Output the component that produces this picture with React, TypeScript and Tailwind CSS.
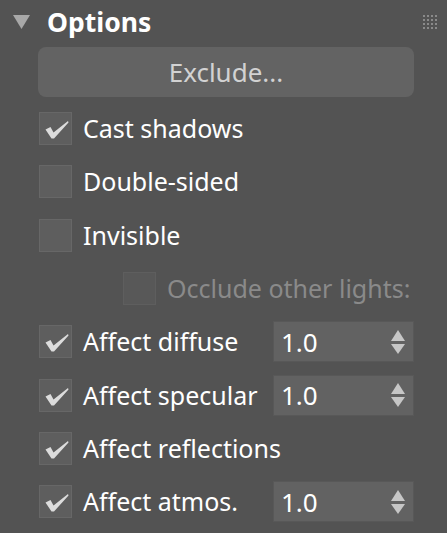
import type { ReactNode } from 'react';

const font = { fontFamily: '"Noto Sans", "Open Sans", sans-serif' };

function Check() {
  return (
    <svg width="33" height="33" viewBox="0 0 33 33" className="block">
      <path d="M5.5 16.5 L10.5 14 L13.5 19.5 L28 8 L28.5 9.5 L14 25.5 L11.5 25.5 Z" fill="#dcdcdc" />
    </svg>
  );
}

function Box({ checked, dim }: { checked?: boolean; dim?: boolean }) {
  return (
    <div
      className={`w-[33px] h-[33px] shrink-0 border ${
        dim ? 'bg-[#585858] border-[#5e5e5e]' : 'bg-[#5e5e5e] border-[#676767]'
      }`}
    >
      {checked && <Check />}
    </div>
  );
}

function Spinner({ value }: { value: string }) {
  return (
    <div className="ml-auto mr-[33px] w-[141px] h-[41px] bg-[#626262] border border-[#585858] flex items-center pl-[7px] pr-[8px]">
      <span className="text-white text-[26px] leading-none">{value}</span>
      <svg width="14" height="26" viewBox="0 0 14 26" className="ml-auto">
        <path d="M7 1 L14 12 L0 12 Z" fill="#c6c6c6" />
        <path d="M0 15 L14 15 L7 25 Z" fill="#c6c6c6" />
      </svg>
    </div>
  );
}

function Row({ children, indent }: { children: ReactNode; indent?: boolean }) {
  return (
    <div className={`h-[53.3px] flex items-center ${indent ? 'pl-[123px]' : 'pl-[39px]'}`}>
      {children}
    </div>
  );
}

function Label({ children, dim }: { children: ReactNode; dim?: boolean }) {
  return (
    <span className={`ml-[11px] text-[25px] leading-none ${dim ? 'text-[#8a8a8a]' : 'text-white'}`}>
      {children}
    </span>
  );
}

function Grip() {
  return (
    <div className="grid grid-cols-4 gap-[2px] mr-[10px]">
      {Array.from({ length: 16 }).map((_, i) => (
        <div key={i} className="w-[2px] h-[2px] bg-[#8a8a8a]" />
      ))}
    </div>
  );
}

export default function App() {
  return (
    <div className="w-[447px] h-[533px] bg-[#535353] overflow-hidden" style={font}>
      <div className="h-[44px] flex items-center pl-[13px]">
        <svg width="17" height="14" viewBox="0 0 17 14">
          <path d="M0 0 L17 0 L8.5 14 Z" fill="#a8a8a8" />
        </svg>
        <span className="ml-[17px] text-white font-bold text-[26.5px] leading-none">Options</span>
        <div className="ml-auto">
          <Grip />
        </div>
      </div>
      <div className="mt-[3px] mx-[38px] mr-[33px] h-[50px] rounded-[8px] bg-[#636363] flex items-center justify-center">
        <span className="text-[#d2d2d2] text-[26px] leading-none">Exclude...</span>
      </div>
      <div className="pt-[5px]">
        <Row>
          <Box checked />
          <Label>Cast shadows</Label>
        </Row>
        <Row>
          <Box />
          <Label>Double-sided</Label>
        </Row>
        <Row>
          <Box />
          <Label>Invisible</Label>
        </Row>
        <Row indent>
          <Box dim />
          <Label dim>Occlude other lights:</Label>
        </Row>
        <Row>
          <Box checked />
          <Label>Affect diffuse</Label>
          <Spinner value="1.0" />
        </Row>
        <Row>
          <Box checked />
          <Label>Affect specular</Label>
          <Spinner value="1.0" />
        </Row>
        <Row>
          <Box checked />
          <Label>Affect reflections</Label>
        </Row>
        <Row>
          <Box checked />
          <Label>Affect atmos.</Label>
          <Spinner value="1.0" />
        </Row>
      </div>
    </div>
  );
}
